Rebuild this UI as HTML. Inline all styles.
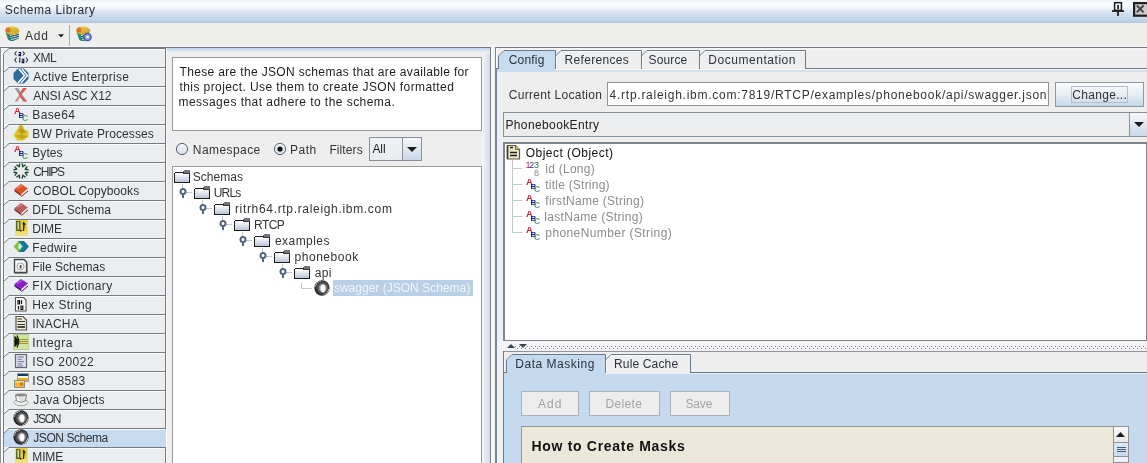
<!DOCTYPE html>
<html><head><meta charset="utf-8"><style>
html,body{margin:0;padding:0;}
body{width:1147px;height:463px;overflow:hidden;position:relative;background:#eeeeee;font-family:"Liberation Sans",sans-serif;}
#root{position:absolute;left:0;top:0;width:1147px;height:463px;overflow:hidden;will-change:transform;}
#root>div{position:absolute;}
.t{white-space:pre;}
</style></head><body><div id="root">
<div style="left:0px;top:0px;width:1147px;height:23px;background:linear-gradient(#eef1f5 0px,#fbfdff 4px,#f6f8fb 7px,#dde6ef 11px,#cddcee 15px,#c5d8ec 19px,#c0d0e0 21px,#bac8d4 23px)"></div>
<div class="t" style="left:4.7px;top:4px;font-size:12px;line-height:12px;color:#2b2f36;font-weight:normal;letter-spacing:0.485px;">Schema Library</div>
<svg style="position:absolute;left:1111px;top:1px;" width="15" height="17" viewBox="0 0 15 17"><rect x="3.6" y="1.7" width="6.8" height="7.6" fill="#fff" stroke="#1a1a1a" stroke-width="1.5"/><rect x="6.2" y="4" width="1.8" height="4" fill="#222"/><rect x="1" y="9.2" width="12" height="1.7" fill="#1a1a1a"/><rect x="6.1" y="10.5" width="1.8" height="4.4" fill="#1a1a1a"/></svg>
<svg style="position:absolute;left:1132px;top:1px;" width="15" height="16" viewBox="0 0 15 16"><rect x="2.1" y="2.1" width="14" height="12.6" fill="#cdcdcd" stroke="#1f1f1f" stroke-width="2.2"/><path d="M4.8 4.5 L11.6 11.3 M11.6 4.5 L4.8 11.3" stroke="#404040" stroke-width="1.8"/></svg>
<div style="left:0px;top:23px;width:1147px;height:1px;background:#e9eef4"></div>
<div style="left:0px;top:24px;width:1147px;height:23px;background:linear-gradient(#eeeeed 0px,#eeeeed 17px,#eef0f2 22px,#f6f8fa 23px)"></div>
<div class="t" style="left:25px;top:30px;font-size:12px;line-height:12px;color:#333;font-weight:normal;letter-spacing:0.75px;">Add</div>
<svg style="position:absolute;left:58px;top:34px;" width="6" height="4" viewBox="0 0 6 4"><path d="M0 0.2 H6 L3 3.4 Z" fill="#222"/></svg>
<div style="left:69px;top:25px;width:1px;height:21px;background:#a9adb3"></div>
<svg style="position:absolute;left:4px;top:25px;" width="17" height="17" viewBox="0 0 17 17"><defs><linearGradient id="bk" x1="0" y1="0" x2="1" y2="0"><stop offset="0" stop-color="#2a9a6a"/><stop offset="1" stop-color="#1a5a88"/></linearGradient><linearGradient id="bt" x1="0" y1="0" x2="1" y2="1"><stop offset="0" stop-color="#f4d050"/><stop offset="1" stop-color="#c89a20"/></linearGradient></defs>
<path d="M1.5 7 L4 14.5 Q6 16.5 9 16 L15 13.5 L15 8 L9 9.5 Z" fill="url(#bk)"/>
<path d="M6 10.5 L15 8.5 M6.5 12.5 L15 10.5 M7 14.5 L15 12.5" stroke="#e8eef0" stroke-width="1"/>
<path d="M6 11.5 L15 9.5 M6.5 13.5 L15 11.5" stroke="#3a4a58" stroke-width="0.8"/>
<path d="M1 6 Q2 1.5 8 1.5 Q13.5 1.5 15.5 5.5 L14 8.5 L8 10 Q3 9.5 1 6Z" fill="url(#bt)"/>
<circle cx="4" cy="5" r="2.2" fill="#e07a28" stroke="#b85a18" stroke-width="0.6"/></svg>
<svg style="position:absolute;left:75px;top:25px;" width="17" height="17" viewBox="0 0 17 17"><defs><linearGradient id="bk" x1="0" y1="0" x2="1" y2="0"><stop offset="0" stop-color="#2a9a6a"/><stop offset="1" stop-color="#1a5a88"/></linearGradient><linearGradient id="bt" x1="0" y1="0" x2="1" y2="1"><stop offset="0" stop-color="#f4d050"/><stop offset="1" stop-color="#c89a20"/></linearGradient></defs>
<path d="M1.5 7 L4 14.5 Q6 16.5 9 16 L15 13.5 L15 8 L9 9.5 Z" fill="url(#bk)"/>
<path d="M6 10.5 L15 8.5 M6.5 12.5 L15 10.5 M7 14.5 L15 12.5" stroke="#e8eef0" stroke-width="1"/>
<path d="M6 11.5 L15 9.5 M6.5 13.5 L15 11.5" stroke="#3a4a58" stroke-width="0.8"/>
<path d="M1 6 Q2 1.5 8 1.5 Q13.5 1.5 15.5 5.5 L14 8.5 L8 10 Q3 9.5 1 6Z" fill="url(#bt)"/>
<circle cx="4" cy="5" r="2.2" fill="#e07a28" stroke="#b85a18" stroke-width="0.6"/><circle cx="12.5" cy="12" r="3.6" fill="#8aa0e0" stroke="#3a58b0" stroke-width="1.3"/><circle cx="12.5" cy="12" r="1.3" fill="#fff"/></svg>
<div style="left:0px;top:47px;width:491px;height:1px;background:#767b82"></div>
<div style="left:495px;top:47px;width:652px;height:1px;background:#767b82"></div>
<div style="left:0px;top:48px;width:166px;height:415px;background:#f4f5f7"></div>
<div style="left:1px;top:48px;width:2px;height:415px;background:#fbfbfc"></div>
<div style="left:0px;top:48px;width:1px;height:415px;background:#8d9096"></div>
<svg style="position:absolute;left:3px;top:48px;" width="162" height="19" viewBox="0 0 162 19"><path d="M0.5 19 V5.5 L6 0.5 H162 V19Z" fill="#eaedf0"/><path d="M0.5 5.5 L6 0.5 H162" fill="none" stroke="#767b82" stroke-width="1"/><path d="M6.5 1.5 H162" stroke="#fafbfc" stroke-width="1"/></svg>
<svg style="position:absolute;left:13px;top:49px;" width="16" height="16" viewBox="0 0 16 16"><g fill="none" stroke-linecap="butt"><path d="M3.5 2.5 L1.8 4.5 L3.5 6.5 M9.8 2.5 L11.5 4.5 L9.8 6.5 M3.5 8.5 L1.8 11 L3.5 13.5 M13 8.5 L14.7 11 L13 13.5" stroke="#2e3a30" stroke-width="1.1"/><path d="M5.6 3.5 H7.6 V6.6 H6 V5.2 H7.4 M6.9 8.6 L6.6 13.6 M8.8 10.4 H10.8 V13.6 H9.2 V12.1 H10.6" stroke="#121a50" stroke-width="1.1"/></g></svg>
<div class="t" style="left:33.0px;top:52px;font-size:12px;line-height:12px;color:#2e3238;font-weight:normal;letter-spacing:-0.45px;">XML</div>
<svg style="position:absolute;left:3px;top:67px;" width="162" height="19" viewBox="0 0 162 19"><path d="M0.5 19 V5.5 L6 0.5 H162 V19Z" fill="#eaedf0"/><path d="M0.5 5.5 L6 0.5 H162" fill="none" stroke="#767b82" stroke-width="1"/><path d="M6.5 1.5 H162" stroke="#fafbfc" stroke-width="1"/></svg>
<svg style="position:absolute;left:13px;top:68px;" width="16" height="16" viewBox="0 0 16 16"><path d="M5 0.5 H11 L15.5 5 V11 L11 15.5 H5 L0.5 11 V5Z" fill="#2f6aa3"/><path d="M6 1 L11.5 7.5 L5 15" stroke="#fff" stroke-width="1.6" fill="none"/><path d="M9 1 L14.5 7.5 L8 15" stroke="#fff" stroke-width="1.3" fill="none"/></svg>
<div class="t" style="left:33.3px;top:71px;font-size:12px;line-height:12px;color:#2e3238;font-weight:normal;letter-spacing:0.313px;">Active Enterprise</div>
<svg style="position:absolute;left:3px;top:86px;" width="162" height="19" viewBox="0 0 162 19"><path d="M0.5 19 V5.5 L6 0.5 H162 V19Z" fill="#eaedf0"/><path d="M0.5 5.5 L6 0.5 H162" fill="none" stroke="#767b82" stroke-width="1"/><path d="M6.5 1.5 H162" stroke="#fafbfc" stroke-width="1"/></svg>
<svg style="position:absolute;left:13px;top:87px;" width="16" height="16" viewBox="0 0 16 16"><path d="M1.5 1 L5 1 L14 14.5 L10.5 14.5Z" fill="#9a9a9a"/><path d="M10 1 L14 1 L8 8 L14 14.5 L10.5 14.5 L5.5 8Z" fill="#d85a5a"/><path d="M1.5 14.5 L6 8.5 L7 10 L4.5 14.5Z" fill="#c48888"/></svg>
<div class="t" style="left:33.3px;top:90px;font-size:12px;line-height:12px;color:#2e3238;font-weight:normal;letter-spacing:-0.182px;">ANSI ASC X12</div>
<svg style="position:absolute;left:3px;top:105px;" width="162" height="19" viewBox="0 0 162 19"><path d="M0.5 19 V5.5 L6 0.5 H162 V19Z" fill="#eaedf0"/><path d="M0.5 5.5 L6 0.5 H162" fill="none" stroke="#767b82" stroke-width="1"/><path d="M6.5 1.5 H162" stroke="#fafbfc" stroke-width="1"/></svg>
<svg style="position:absolute;left:13px;top:106px;" width="16" height="16" viewBox="0 0 16 16"><text x="1" y="8" font-family="Liberation Sans" font-size="9.5" font-weight="bold" fill="#d0283a">A</text><text x="5.6" y="12.3" font-family="Liberation Sans" font-size="8" font-weight="bold" fill="#141c80">B</text><text x="9" y="15.3" font-family="Liberation Sans" font-size="8.5" font-weight="bold" fill="#5a9a7a">C</text></svg>
<div class="t" style="left:32.3px;top:109px;font-size:12px;line-height:12px;color:#2e3238;font-weight:normal;letter-spacing:0.38px;">Base64</div>
<svg style="position:absolute;left:3px;top:124px;" width="162" height="19" viewBox="0 0 162 19"><path d="M0.5 19 V5.5 L6 0.5 H162 V19Z" fill="#eaedf0"/><path d="M0.5 5.5 L6 0.5 H162" fill="none" stroke="#767b82" stroke-width="1"/><path d="M6.5 1.5 H162" stroke="#fafbfc" stroke-width="1"/></svg>
<svg style="position:absolute;left:13px;top:125px;" width="16" height="16" viewBox="0 0 16 16"><path d="M6 0.5 H10 L11 4 L15.5 6.5 L15.5 12 L10 15.5 L4 15.5 L0.5 11 L3 6 L5 4Z" fill="#dcc22e"/><path d="M5 5 L9.5 3.5 L13 7 L8.5 9Z" fill="#b89a10"/><path d="M2 11 L8 9 L14 11.5 L9.5 14Z" fill="#c4a818"/><path d="M6.5 0.5 H9.5 V4 H6.5Z" fill="#c7aa28"/><path d="M1 11 L4 15" stroke="#e8dc70"/></svg>
<div class="t" style="left:32.3px;top:128px;font-size:12px;line-height:12px;color:#2e3238;font-weight:normal;letter-spacing:0.116px;">BW Private Processes</div>
<svg style="position:absolute;left:3px;top:143px;" width="162" height="19" viewBox="0 0 162 19"><path d="M0.5 19 V5.5 L6 0.5 H162 V19Z" fill="#eaedf0"/><path d="M0.5 5.5 L6 0.5 H162" fill="none" stroke="#767b82" stroke-width="1"/><path d="M6.5 1.5 H162" stroke="#fafbfc" stroke-width="1"/></svg>
<svg style="position:absolute;left:13px;top:144px;" width="16" height="16" viewBox="0 0 16 16"><text x="1" y="8" font-family="Liberation Sans" font-size="9.5" font-weight="bold" fill="#d0283a">A</text><text x="5.6" y="12.3" font-family="Liberation Sans" font-size="8" font-weight="bold" fill="#141c80">B</text><text x="9" y="15.3" font-family="Liberation Sans" font-size="8.5" font-weight="bold" fill="#5a9a7a">C</text></svg>
<div class="t" style="left:32.3px;top:147px;font-size:12px;line-height:12px;color:#2e3238;font-weight:normal;letter-spacing:0.05px;">Bytes</div>
<svg style="position:absolute;left:3px;top:162px;" width="162" height="19" viewBox="0 0 162 19"><path d="M0.5 19 V5.5 L6 0.5 H162 V19Z" fill="#eaedf0"/><path d="M0.5 5.5 L6 0.5 H162" fill="none" stroke="#767b82" stroke-width="1"/><path d="M6.5 1.5 H162" stroke="#fafbfc" stroke-width="1"/></svg>
<svg style="position:absolute;left:13px;top:163px;" width="16" height="16" viewBox="0 0 16 16"><path d="M12.06 2.11 L9.76 3.75 L9.29 0.96 M15.04 6.71 L12.25 6.24 L13.89 3.94 M13.89 12.06 L12.25 9.76 L15.04 9.29 M9.29 15.04 L9.76 12.25 L12.06 13.89 M3.94 13.89 L6.24 12.25 L6.71 15.04 M0.96 9.29 L3.75 9.76 L2.11 12.06 M2.11 3.94 L3.75 6.24 L0.96 6.71 M6.71 0.96 L6.24 3.75 L3.94 2.11" stroke="#1f4a32" stroke-width="1.4" fill="none" stroke-linecap="round" stroke-linejoin="round"/></svg>
<div class="t" style="left:33.3px;top:166px;font-size:12px;line-height:12px;color:#2e3238;font-weight:normal;letter-spacing:-1.25px;">CHIPS</div>
<svg style="position:absolute;left:3px;top:181px;" width="162" height="19" viewBox="0 0 162 19"><path d="M0.5 19 V5.5 L6 0.5 H162 V19Z" fill="#eaedf0"/><path d="M0.5 5.5 L6 0.5 H162" fill="none" stroke="#767b82" stroke-width="1"/><path d="M6.5 1.5 H162" stroke="#fafbfc" stroke-width="1"/></svg>
<svg style="position:absolute;left:13px;top:182px;" width="16" height="16" viewBox="0 0 16 16"><path d="M1.5 7 L8 2 L15 6.5 L8.5 12Z" fill="#e2502a"/><path d="M1.5 7 L8.5 12 V14.5 L1.5 9.5Z" fill="#a83218"/><path d="M8.5 12 L15 6.5 V9 L8.5 14.5Z" fill="#f2e6e0"/><path d="M8.5 14.5 L15 9" stroke="#8a2a18" stroke-width="1"/><path d="M4 6.5 L9 3.5" stroke="#ffffff" stroke-opacity=".35" stroke-width="1.2"/></svg>
<div class="t" style="left:33.3px;top:185px;font-size:12px;line-height:12px;color:#2e3238;font-weight:normal;letter-spacing:0.064px;">COBOL Copybooks</div>
<svg style="position:absolute;left:3px;top:200px;" width="162" height="19" viewBox="0 0 162 19"><path d="M0.5 19 V5.5 L6 0.5 H162 V19Z" fill="#eaedf0"/><path d="M0.5 5.5 L6 0.5 H162" fill="none" stroke="#767b82" stroke-width="1"/><path d="M6.5 1.5 H162" stroke="#fafbfc" stroke-width="1"/></svg>
<svg style="position:absolute;left:13px;top:201px;" width="16" height="16" viewBox="0 0 16 16"><path d="M1.5 7 L8 2 L15 6.5 L8.5 12Z" fill="#b85c5c"/><path d="M1.5 7 L8.5 12 V14.5 L1.5 9.5Z" fill="#8a3a3a"/><path d="M8.5 12 L15 6.5 V9 L8.5 14.5Z" fill="#f2e6e0"/><path d="M8.5 14.5 L15 9" stroke="#6a2a2a" stroke-width="1"/><path d="M4 6.5 L9 3.5" stroke="#ffffff" stroke-opacity=".35" stroke-width="1.2"/></svg>
<div class="t" style="left:32.3px;top:204px;font-size:12px;line-height:12px;color:#2e3238;font-weight:normal;letter-spacing:0.05px;">DFDL Schema</div>
<svg style="position:absolute;left:3px;top:219px;" width="162" height="19" viewBox="0 0 162 19"><path d="M0.5 19 V5.5 L6 0.5 H162 V19Z" fill="#eaedf0"/><path d="M0.5 5.5 L6 0.5 H162" fill="none" stroke="#767b82" stroke-width="1"/><path d="M6.5 1.5 H162" stroke="#fafbfc" stroke-width="1"/></svg>
<svg style="position:absolute;left:13px;top:220px;" width="16" height="16" viewBox="0 0 16 16"><path d="M2.5 0 H14.5 V16 H2.5Z" fill="#e6cf3c"/><path d="M2.5 11.5 H14.5 V16 H2.5Z" fill="#efe07a"/><path d="M3 1 H7.5 V11 H3Z" fill="#5e6a22"/><path d="M4.5 2 H6 V9.5 H4.5Z" fill="#d8dc9a"/><path d="M8.5 10 H7 V11.5 H8.5Z" fill="#222"/><path d="M10.5 1.5 L13 4.5 L11.8 4.8 L11 11 H9.8 L10.2 4.5 L9.2 4.2Z" fill="#2a2418"/></svg>
<div class="t" style="left:32.3px;top:223px;font-size:12px;line-height:12px;color:#2e3238;font-weight:normal;letter-spacing:-0.1px;">DIME</div>
<svg style="position:absolute;left:3px;top:238px;" width="162" height="19" viewBox="0 0 162 19"><path d="M0.5 19 V5.5 L6 0.5 H162 V19Z" fill="#eaedf0"/><path d="M0.5 5.5 L6 0.5 H162" fill="none" stroke="#767b82" stroke-width="1"/><path d="M6.5 1.5 H162" stroke="#fafbfc" stroke-width="1"/></svg>
<svg style="position:absolute;left:13px;top:239px;" width="16" height="16" viewBox="0 0 16 16"><path d="M0.5 7.5 L5.5 2 H8.5 L6 7.5 L8.5 13 H5.5Z" fill="#86c040"/><path d="M5.5 2 H11 L16 7.5 L11 13 H5.5 L9 7.5Z" fill="#1a6ea5"/><path d="M5.5 2 H8 L11 7.5 L8 13 H5.5 L8.5 7.5Z" fill="#128a7a"/><path d="M6.5 4 L9.5 7.5 L6.5 11 L5 7.5Z" fill="#c8f4ee"/></svg>
<div class="t" style="left:32.3px;top:242px;font-size:12px;line-height:12px;color:#2e3238;font-weight:normal;letter-spacing:0.383px;">Fedwire</div>
<svg style="position:absolute;left:3px;top:257px;" width="162" height="19" viewBox="0 0 162 19"><path d="M0.5 19 V5.5 L6 0.5 H162 V19Z" fill="#eaedf0"/><path d="M0.5 5.5 L6 0.5 H162" fill="none" stroke="#767b82" stroke-width="1"/><path d="M6.5 1.5 H162" stroke="#fafbfc" stroke-width="1"/></svg>
<svg style="position:absolute;left:13px;top:258px;" width="16" height="16" viewBox="0 0 16 16"><path d="M1.5 1.5 H11 L13.5 4 V14.5 H1.5Z" fill="#fafafa" stroke="#3e3e3e" stroke-width="1.3"/><path d="M14 4.5 V15 H2" stroke="#555" stroke-width="1" fill="none"/><circle cx="7.5" cy="8.5" r="3.6" fill="none" stroke="#9a9a9a" stroke-width="1"/><rect x="6.6" y="7" width="2" height="3.5" fill="#555"/></svg>
<div class="t" style="left:32.3px;top:261px;font-size:12px;line-height:12px;color:#2e3238;font-weight:normal;letter-spacing:0.018px;">File Schemas</div>
<svg style="position:absolute;left:3px;top:276px;" width="162" height="19" viewBox="0 0 162 19"><path d="M0.5 19 V5.5 L6 0.5 H162 V19Z" fill="#eaedf0"/><path d="M0.5 5.5 L6 0.5 H162" fill="none" stroke="#767b82" stroke-width="1"/><path d="M6.5 1.5 H162" stroke="#fafbfc" stroke-width="1"/></svg>
<svg style="position:absolute;left:13px;top:277px;" width="16" height="16" viewBox="0 0 16 16"><path d="M1.5 7 L8 2 L15 6.5 L8.5 12Z" fill="#8a1fc8"/><path d="M1.5 7 L8.5 12 V14.5 L1.5 9.5Z" fill="#5a0f8a"/><path d="M8.5 12 L15 6.5 V9 L8.5 14.5Z" fill="#f2e6e0"/><path d="M8.5 14.5 L15 9" stroke="#4a0a7a" stroke-width="1"/><path d="M4 6.5 L9 3.5" stroke="#ffffff" stroke-opacity=".35" stroke-width="1.2"/></svg>
<div class="t" style="left:32.3px;top:280px;font-size:12px;line-height:12px;color:#2e3238;font-weight:normal;letter-spacing:0.346px;">FIX Dictionary</div>
<svg style="position:absolute;left:3px;top:295px;" width="162" height="19" viewBox="0 0 162 19"><path d="M0.5 19 V5.5 L6 0.5 H162 V19Z" fill="#eaedf0"/><path d="M0.5 5.5 L6 0.5 H162" fill="none" stroke="#767b82" stroke-width="1"/><path d="M6.5 1.5 H162" stroke="#fafbfc" stroke-width="1"/></svg>
<svg style="position:absolute;left:13px;top:296px;" width="16" height="16" viewBox="0 0 16 16"><path d="M2.5 1.5 H10.5 L13 4 V15 H2.5Z" fill="#fafafa" stroke="#555" stroke-width="1.1"/><path d="M5 4.5 V8 H6.5 V4.5Z M8.5 4.3 V8" stroke="#111" stroke-width="1.2" fill="none"/><path d="M5.5 10 V13.5 M8 10 V13.5 H9.8 V10Z" stroke="#111" stroke-width="1.2" fill="none"/></svg>
<div class="t" style="left:32.3px;top:299px;font-size:12px;line-height:12px;color:#2e3238;font-weight:normal;letter-spacing:0.367px;">Hex String</div>
<svg style="position:absolute;left:3px;top:314px;" width="162" height="19" viewBox="0 0 162 19"><path d="M0.5 19 V5.5 L6 0.5 H162 V19Z" fill="#eaedf0"/><path d="M0.5 5.5 L6 0.5 H162" fill="none" stroke="#767b82" stroke-width="1"/><path d="M6.5 1.5 H162" stroke="#fafbfc" stroke-width="1"/></svg>
<svg style="position:absolute;left:13px;top:315px;" width="16" height="16" viewBox="0 0 16 16"><path d="M3 1.5 H10 L13.5 5 V15 H3Z" fill="#f0eed0" stroke="#555" stroke-width="1.2"/><path d="M4.5 4 H9 M4.5 6.5 H12 M4.5 9.5 H12" stroke="#333" stroke-width="1.2"/><path d="M4.5 12 H12" stroke="#111" stroke-width="1.5"/></svg>
<div class="t" style="left:32.3px;top:318px;font-size:12px;line-height:12px;color:#2e3238;font-weight:normal;letter-spacing:0.22px;">INACHA</div>
<svg style="position:absolute;left:3px;top:333px;" width="162" height="19" viewBox="0 0 162 19"><path d="M0.5 19 V5.5 L6 0.5 H162 V19Z" fill="#eaedf0"/><path d="M0.5 5.5 L6 0.5 H162" fill="none" stroke="#767b82" stroke-width="1"/><path d="M6.5 1.5 H162" stroke="#fafbfc" stroke-width="1"/></svg>
<svg style="position:absolute;left:13px;top:334px;" width="16" height="16" viewBox="0 0 16 16"><rect x="0.5" y="0.5" width="15.5" height="15" fill="#cfe4a0" stroke="#a8c080" stroke-width="0.8"/><path d="M1.5 2.5 L6 7.5 L1.5 12.5 M4 1.5 L6 7 M4 13.5 L6 8 M1 7.5 H6" stroke="#1a2208" stroke-width="1.3"/><path d="M6 5.5 H15 M6 7.5 H15 M6 9.5 H15" stroke="#a89020" stroke-width="1"/></svg>
<div class="t" style="left:32.3px;top:337px;font-size:12px;line-height:12px;color:#2e3238;font-weight:normal;letter-spacing:0.45px;">Integra</div>
<svg style="position:absolute;left:3px;top:352px;" width="162" height="19" viewBox="0 0 162 19"><path d="M0.5 19 V5.5 L6 0.5 H162 V19Z" fill="#eaedf0"/><path d="M0.5 5.5 L6 0.5 H162" fill="none" stroke="#767b82" stroke-width="1"/><path d="M6.5 1.5 H162" stroke="#fafbfc" stroke-width="1"/></svg>
<svg style="position:absolute;left:13px;top:353px;" width="16" height="16" viewBox="0 0 16 16"><rect x="2.5" y="1.5" width="11" height="13" fill="#dedff2" stroke="#666670" stroke-width="1.2"/><path d="M4.5 4 H11 M4.5 6.3 H9 M4.5 8.6 H11 M4.5 10.9 H9.5 M4.5 13 H10" stroke="#7a7aa0" stroke-width="1"/></svg>
<div class="t" style="left:32.3px;top:356px;font-size:12px;line-height:12px;color:#2e3238;font-weight:normal;letter-spacing:0.488px;">ISO 20022</div>
<svg style="position:absolute;left:3px;top:371px;" width="162" height="19" viewBox="0 0 162 19"><path d="M0.5 19 V5.5 L6 0.5 H162 V19Z" fill="#eaedf0"/><path d="M0.5 5.5 L6 0.5 H162" fill="none" stroke="#767b82" stroke-width="1"/><path d="M6.5 1.5 H162" stroke="#fafbfc" stroke-width="1"/></svg>
<svg style="position:absolute;left:13px;top:372px;" width="16" height="16" viewBox="0 0 16 16"><rect x="4.5" y="1.5" width="11" height="8" fill="#f0e8c0" stroke="#8a8a80" stroke-width="0.8"/><rect x="5" y="2" width="10" height="2" fill="#123a70"/><rect x="5" y="4" width="10" height="2" fill="#f6f6e0"/><rect x="5" y="6" width="10" height="3" fill="#e6b030"/><rect x="1.5" y="8.5" width="10" height="7" fill="#efb83a" stroke="#8a8a7a" stroke-width="0.9"/><rect x="2" y="9" width="9" height="1.5" fill="#f4e070"/><circle cx="8.5" cy="12" r="1.8" fill="#d07a20"/></svg>
<div class="t" style="left:32.3px;top:375px;font-size:12px;line-height:12px;color:#2e3238;font-weight:normal;letter-spacing:0.314px;">ISO 8583</div>
<svg style="position:absolute;left:3px;top:390px;" width="162" height="19" viewBox="0 0 162 19"><path d="M0.5 19 V5.5 L6 0.5 H162 V19Z" fill="#eaedf0"/><path d="M0.5 5.5 L6 0.5 H162" fill="none" stroke="#767b82" stroke-width="1"/><path d="M6.5 1.5 H162" stroke="#fafbfc" stroke-width="1"/></svg>
<svg style="position:absolute;left:13px;top:391px;" width="16" height="16" viewBox="0 0 16 16"><ellipse cx="8" cy="11.5" rx="7" ry="3.2" fill="#f0f0f0" stroke="#9a9a9a" stroke-width="0.9"/><path d="M2.5 4 H13.5 L12.5 10 Q8 12.5 3.5 10Z" fill="#e2e2e2" stroke="#7a7a7a" stroke-width="0.9"/><ellipse cx="8" cy="4" rx="5.5" ry="1.4" fill="#8a8a8a"/><path d="M5 6 Q4.5 8.5 6 10" stroke="#fff" stroke-width="1.2" fill="none"/></svg>
<div class="t" style="left:33.3px;top:394px;font-size:12px;line-height:12px;color:#2e3238;font-weight:normal;letter-spacing:0.173px;">Java Objects</div>
<svg style="position:absolute;left:3px;top:409px;" width="162" height="19" viewBox="0 0 162 19"><path d="M0.5 19 V5.5 L6 0.5 H162 V19Z" fill="#eaedf0"/><path d="M0.5 5.5 L6 0.5 H162" fill="none" stroke="#767b82" stroke-width="1"/><path d="M6.5 1.5 H162" stroke="#fafbfc" stroke-width="1"/></svg>
<svg style="position:absolute;left:13px;top:410px;" width="16" height="16" viewBox="0 0 16 16"><defs><radialGradient id="jg" cx="0.55" cy="0.5" r="0.5"><stop offset="0.3" stop-color="#c8c8c8"/><stop offset="0.6" stop-color="#5a5a5a"/><stop offset="1" stop-color="#1e1e1e"/></radialGradient></defs><ellipse cx="8" cy="8" rx="7.6" ry="7.8" fill="url(#jg)"/><ellipse cx="9" cy="8.5" rx="2.3" ry="4" fill="#fbfbfb"/><path d="M1.6 6.5 A7 7 0 0 1 7 0.9" stroke="#fff" stroke-width="1.1" stroke-dasharray="1.1 1.1" fill="none"/><path d="M14.6 9.5 A7 7 0 0 1 9.5 15.1" stroke="#fff" stroke-width="1.1" stroke-dasharray="1.1 1.1" fill="none"/></svg>
<div class="t" style="left:33.3px;top:413px;font-size:12px;line-height:12px;color:#2e3238;font-weight:normal;letter-spacing:-1.3px;">JSON</div>
<svg style="position:absolute;left:3px;top:428px;" width="167" height="19" viewBox="0 0 167 19"><path d="M0.5 19 V5.5 L6 0.5 H167 V19Z" fill="#c7dbf0"/><path d="M0.5 5.5 L6 0.5 H167" fill="none" stroke="#767b82" stroke-width="1"/><path d="M6.5 1.5 H167" stroke="#fafbfc" stroke-width="1"/></svg>
<svg style="position:absolute;left:13px;top:429px;" width="16" height="16" viewBox="0 0 16 16"><defs><radialGradient id="jg" cx="0.55" cy="0.5" r="0.5"><stop offset="0.3" stop-color="#c8c8c8"/><stop offset="0.6" stop-color="#5a5a5a"/><stop offset="1" stop-color="#1e1e1e"/></radialGradient></defs><ellipse cx="8" cy="8" rx="7.6" ry="7.8" fill="url(#jg)"/><ellipse cx="9" cy="8.5" rx="2.3" ry="4" fill="#fbfbfb"/><path d="M1.6 6.5 A7 7 0 0 1 7 0.9" stroke="#fff" stroke-width="1.1" stroke-dasharray="1.1 1.1" fill="none"/><path d="M14.6 9.5 A7 7 0 0 1 9.5 15.1" stroke="#fff" stroke-width="1.1" stroke-dasharray="1.1 1.1" fill="none"/></svg>
<div class="t" style="left:33.3px;top:432px;font-size:12px;line-height:12px;color:#2e3238;font-weight:normal;letter-spacing:-0.45px;">JSON Schema</div>
<svg style="position:absolute;left:3px;top:447px;" width="162" height="19" viewBox="0 0 162 19"><path d="M0.5 19 V5.5 L6 0.5 H162 V19Z" fill="#eaedf0"/><path d="M0.5 5.5 L6 0.5 H162" fill="none" stroke="#767b82" stroke-width="1"/><path d="M6.5 1.5 H162" stroke="#fafbfc" stroke-width="1"/></svg>
<svg style="position:absolute;left:13px;top:448px;" width="16" height="16" viewBox="0 0 16 16"><path d="M2.5 0 H14.5 V16 H2.5Z" fill="#e6cf3c"/><path d="M2.5 11.5 H14.5 V16 H2.5Z" fill="#efe07a"/><path d="M3 1 H7.5 V11 H3Z" fill="#5e6a22"/><path d="M4.5 2 H6 V9.5 H4.5Z" fill="#d8dc9a"/><path d="M8.5 10 H7 V11.5 H8.5Z" fill="#222"/><path d="M10.5 1.5 L13 4.5 L11.8 4.8 L11 11 H9.8 L10.2 4.5 L9.2 4.2Z" fill="#2a2418"/></svg>
<div class="t" style="left:32.3px;top:451px;font-size:12px;line-height:12px;color:#2e3238;font-weight:normal;letter-spacing:-0.133px;">MIME</div>
<div style="left:3px;top:54px;width:1px;height:409px;background:#767b82"></div>
<div style="left:165px;top:47px;width:1px;height:416px;background:#767b82"></div>
<div style="left:165px;top:429px;width:2px;height:18px;background:#c7dbf0"></div>
<div style="left:166px;top:48px;width:324px;height:415px;background:#eeeeee"></div>
<div style="left:166px;top:48px;width:324px;height:6px;background:linear-gradient(#c4d5f2 0px,#cbd9ec 2px,#e2e9f0 3px,#e9edf0 4px,#eeeeee 6px)"></div>
<div style="left:166px;top:48px;width:1px;height:415px;background:#fbfcfd"></div>
<div style="left:482px;top:54px;width:8px;height:409px;background:linear-gradient(to right,#f6f8fa,#e4ebf0 40%,#d4dce5)"></div>
<div style="left:490px;top:47px;width:1px;height:416px;background:#767b82"></div>
<div style="left:491px;top:47px;width:4px;height:416px;background:linear-gradient(to right,#fbfcfc,#e9eef0)"></div>
<div style="left:172px;top:57px;width:310px;height:74px;background:#fff;border:1px solid #9a9a9a;box-sizing:border-box"></div>
<div class="t" style="left:179.5px;top:66px;font-size:12px;line-height:12px;color:#1e1e1e;font-weight:normal;letter-spacing:0.34px;">These are the JSON schemas that are available for</div>
<div class="t" style="left:179.5px;top:81px;font-size:12px;line-height:12px;color:#1e1e1e;font-weight:normal;letter-spacing:0.411px;">this project. Use them to create JSON formatted</div>
<div class="t" style="left:178.5px;top:96px;font-size:12px;line-height:12px;color:#1e1e1e;font-weight:normal;letter-spacing:0.456px;">messages that adhere to the schema.</div>
<svg style="position:absolute;left:175px;top:142px;" width="14" height="14" viewBox="0 0 14 14"><defs><linearGradient id="rg" x1="0" y1="0" x2="0" y2="1"><stop offset="0" stop-color="#f4f6f9"/><stop offset="1" stop-color="#d6e0ea"/></linearGradient></defs><circle cx="7" cy="7" r="5.6" fill="url(#rg)" stroke="#5a626c" stroke-width="1"/></svg>
<div class="t" style="left:192.8px;top:144px;font-size:12px;line-height:12px;color:#333;font-weight:normal;letter-spacing:0.425px;">Namespace</div>
<svg style="position:absolute;left:273px;top:142px;" width="14" height="14" viewBox="0 0 14 14"><circle cx="7" cy="7" r="5.6" fill="url(#rg)" stroke="#5a626c" stroke-width="1"/><circle cx="7" cy="7" r="2.6" fill="#111"/></svg>
<div class="t" style="left:290px;top:144px;font-size:12px;line-height:12px;color:#333;font-weight:normal;letter-spacing:0.5px;">Path</div>
<div class="t" style="left:329.4px;top:144px;font-size:12px;line-height:12px;color:#333;font-weight:normal;letter-spacing:0.1px;">Filters</div>
<div style="left:369px;top:137px;width:53px;height:24px;border:1px solid #8a9099;box-sizing:border-box;background:linear-gradient(#eef3f8,#e9ecef)"></div>
<div style="left:402px;top:138px;width:18px;height:22px;border-left:1px solid #8a9099;background:linear-gradient(#f6f8fb,#c9d8e8)"></div>
<svg style="position:absolute;left:407px;top:147px;" width="10" height="5" viewBox="0 0 10 5"><path d="M0 0 H10 L5 5Z" fill="#1d1d1d"/></svg>
<div class="t" style="left:372.4px;top:143px;font-size:12px;line-height:12px;color:#222;font-weight:normal;letter-spacing:-0.05px;">All</div>
<div style="left:172px;top:166px;width:310px;height:297px;background:#fff;border:1px solid #9a9a9a;border-bottom:none;box-sizing:border-box"></div>
<svg style="position:absolute;left:174px;top:170px;shape-rendering:crispEdges" width="17" height="14" viewBox="0 0 17 14"><defs><linearGradient id="fg" x1="0" y1="0" x2="0" y2="1"><stop offset="0" stop-color="#ffffff"/><stop offset="1" stop-color="#bcc5d8"/></linearGradient></defs><rect x="1" y="3" width="14" height="9" fill="url(#fg)"/><path d="M9 2 L10 0 H16 V3 H9Z" fill="#70757c"/><path d="M0.5 2.5 H9.5 M0.5 2.5 V12.5 H15.5 V2.5" fill="none" stroke="#1e1e1e" stroke-width="1"/><path d="M9 3.5 H15.5" stroke="#3a3a3a" stroke-width="1"/></svg>
<div class="t" style="left:192.7px;top:171px;font-size:12px;line-height:12px;color:#333;font-weight:normal;letter-spacing:0.067px;">Schemas</div>
<svg style="position:absolute;left:194px;top:186px;shape-rendering:crispEdges" width="17" height="14" viewBox="0 0 17 14"><defs><linearGradient id="fg" x1="0" y1="0" x2="0" y2="1"><stop offset="0" stop-color="#ffffff"/><stop offset="1" stop-color="#bcc5d8"/></linearGradient></defs><rect x="1" y="3" width="14" height="9" fill="url(#fg)"/><path d="M9 2 L10 0 H16 V3 H9Z" fill="#70757c"/><path d="M0.5 2.5 H9.5 M0.5 2.5 V12.5 H15.5 V2.5" fill="none" stroke="#1e1e1e" stroke-width="1"/><path d="M9 3.5 H15.5" stroke="#3a3a3a" stroke-width="1"/></svg>
<div class="t" style="left:213.7px;top:187px;font-size:12px;line-height:12px;color:#333;font-weight:normal;letter-spacing:-0.8px;">URLs</div>
<div style="left:182px;top:184px;width:1px;height:4px;background:#c5c9ce"></div>
<div style="left:185px;top:192px;width:7px;height:1px;background:#c5c9ce"></div>
<svg style="position:absolute;left:178.5px;top:188px;" width="8" height="11" viewBox="0 0 8 11"><circle cx="4" cy="3.5" r="2.5" fill="none" stroke="#56657a" stroke-width="2"/><rect x="3" y="5.5" width="2" height="4.5" fill="#56657a"/></svg>
<svg style="position:absolute;left:214px;top:202px;shape-rendering:crispEdges" width="17" height="14" viewBox="0 0 17 14"><defs><linearGradient id="fg" x1="0" y1="0" x2="0" y2="1"><stop offset="0" stop-color="#ffffff"/><stop offset="1" stop-color="#bcc5d8"/></linearGradient></defs><rect x="1" y="3" width="14" height="9" fill="url(#fg)"/><path d="M9 2 L10 0 H16 V3 H9Z" fill="#70757c"/><path d="M0.5 2.5 H9.5 M0.5 2.5 V12.5 H15.5 V2.5" fill="none" stroke="#1e1e1e" stroke-width="1"/><path d="M9 3.5 H15.5" stroke="#3a3a3a" stroke-width="1"/></svg>
<div class="t" style="left:234.9px;top:203px;font-size:12px;line-height:12px;color:#333;font-weight:normal;letter-spacing:0.677px;">ritrh64.rtp.raleigh.ibm.com</div>
<div style="left:202px;top:200px;width:1px;height:4px;background:#c5c9ce"></div>
<div style="left:205px;top:208px;width:7px;height:1px;background:#c5c9ce"></div>
<svg style="position:absolute;left:198.5px;top:204px;" width="8" height="11" viewBox="0 0 8 11"><circle cx="4" cy="3.5" r="2.5" fill="none" stroke="#56657a" stroke-width="2"/><rect x="3" y="5.5" width="2" height="4.5" fill="#56657a"/></svg>
<svg style="position:absolute;left:234px;top:218px;shape-rendering:crispEdges" width="17" height="14" viewBox="0 0 17 14"><defs><linearGradient id="fg" x1="0" y1="0" x2="0" y2="1"><stop offset="0" stop-color="#ffffff"/><stop offset="1" stop-color="#bcc5d8"/></linearGradient></defs><rect x="1" y="3" width="14" height="9" fill="url(#fg)"/><path d="M9 2 L10 0 H16 V3 H9Z" fill="#70757c"/><path d="M0.5 2.5 H9.5 M0.5 2.5 V12.5 H15.5 V2.5" fill="none" stroke="#1e1e1e" stroke-width="1"/><path d="M9 3.5 H15.5" stroke="#3a3a3a" stroke-width="1"/></svg>
<div class="t" style="left:254px;top:219px;font-size:12px;line-height:12px;color:#333;font-weight:normal;letter-spacing:-0.567px;">RTCP</div>
<div style="left:222px;top:216px;width:1px;height:4px;background:#c5c9ce"></div>
<div style="left:225px;top:224px;width:7px;height:1px;background:#c5c9ce"></div>
<svg style="position:absolute;left:218.5px;top:220px;" width="8" height="11" viewBox="0 0 8 11"><circle cx="4" cy="3.5" r="2.5" fill="none" stroke="#56657a" stroke-width="2"/><rect x="3" y="5.5" width="2" height="4.5" fill="#56657a"/></svg>
<svg style="position:absolute;left:254px;top:234px;shape-rendering:crispEdges" width="17" height="14" viewBox="0 0 17 14"><defs><linearGradient id="fg" x1="0" y1="0" x2="0" y2="1"><stop offset="0" stop-color="#ffffff"/><stop offset="1" stop-color="#bcc5d8"/></linearGradient></defs><rect x="1" y="3" width="14" height="9" fill="url(#fg)"/><path d="M9 2 L10 0 H16 V3 H9Z" fill="#70757c"/><path d="M0.5 2.5 H9.5 M0.5 2.5 V12.5 H15.5 V2.5" fill="none" stroke="#1e1e1e" stroke-width="1"/><path d="M9 3.5 H15.5" stroke="#3a3a3a" stroke-width="1"/></svg>
<div class="t" style="left:275px;top:235px;font-size:12px;line-height:12px;color:#333;font-weight:normal;letter-spacing:0.443px;">examples</div>
<div style="left:242px;top:232px;width:1px;height:4px;background:#c5c9ce"></div>
<div style="left:245px;top:240px;width:7px;height:1px;background:#c5c9ce"></div>
<svg style="position:absolute;left:238.5px;top:236px;" width="8" height="11" viewBox="0 0 8 11"><circle cx="4" cy="3.5" r="2.5" fill="none" stroke="#56657a" stroke-width="2"/><rect x="3" y="5.5" width="2" height="4.5" fill="#56657a"/></svg>
<svg style="position:absolute;left:274px;top:250px;shape-rendering:crispEdges" width="17" height="14" viewBox="0 0 17 14"><defs><linearGradient id="fg" x1="0" y1="0" x2="0" y2="1"><stop offset="0" stop-color="#ffffff"/><stop offset="1" stop-color="#bcc5d8"/></linearGradient></defs><rect x="1" y="3" width="14" height="9" fill="url(#fg)"/><path d="M9 2 L10 0 H16 V3 H9Z" fill="#70757c"/><path d="M0.5 2.5 H9.5 M0.5 2.5 V12.5 H15.5 V2.5" fill="none" stroke="#1e1e1e" stroke-width="1"/><path d="M9 3.5 H15.5" stroke="#3a3a3a" stroke-width="1"/></svg>
<div class="t" style="left:294.5px;top:251px;font-size:12px;line-height:12px;color:#333;font-weight:normal;letter-spacing:0.538px;">phonebook</div>
<div style="left:262px;top:248px;width:1px;height:4px;background:#c5c9ce"></div>
<div style="left:265px;top:256px;width:7px;height:1px;background:#c5c9ce"></div>
<svg style="position:absolute;left:258.5px;top:252px;" width="8" height="11" viewBox="0 0 8 11"><circle cx="4" cy="3.5" r="2.5" fill="none" stroke="#56657a" stroke-width="2"/><rect x="3" y="5.5" width="2" height="4.5" fill="#56657a"/></svg>
<svg style="position:absolute;left:294px;top:266px;shape-rendering:crispEdges" width="17" height="14" viewBox="0 0 17 14"><defs><linearGradient id="fg" x1="0" y1="0" x2="0" y2="1"><stop offset="0" stop-color="#ffffff"/><stop offset="1" stop-color="#bcc5d8"/></linearGradient></defs><rect x="1" y="3" width="14" height="9" fill="url(#fg)"/><path d="M9 2 L10 0 H16 V3 H9Z" fill="#70757c"/><path d="M0.5 2.5 H9.5 M0.5 2.5 V12.5 H15.5 V2.5" fill="none" stroke="#1e1e1e" stroke-width="1"/><path d="M9 3.5 H15.5" stroke="#3a3a3a" stroke-width="1"/></svg>
<div class="t" style="left:314.7px;top:267px;font-size:12px;line-height:12px;color:#333;font-weight:normal;letter-spacing:0.35px;">api</div>
<div style="left:282px;top:264px;width:1px;height:4px;background:#c5c9ce"></div>
<div style="left:285px;top:272px;width:7px;height:1px;background:#c5c9ce"></div>
<svg style="position:absolute;left:278.5px;top:268px;" width="8" height="11" viewBox="0 0 8 11"><circle cx="4" cy="3.5" r="2.5" fill="none" stroke="#56657a" stroke-width="2"/><rect x="3" y="5.5" width="2" height="4.5" fill="#56657a"/></svg>
<div style="left:301px;top:283px;width:1px;height:6px;background:#c5c9ce"></div>
<div style="left:301px;top:288px;width:11px;height:1px;background:#c5c9ce"></div>
<svg style="position:absolute;left:314px;top:280px;" width="16" height="16" viewBox="0 0 16 16"><defs><radialGradient id="jg" cx="0.55" cy="0.5" r="0.5"><stop offset="0.3" stop-color="#c8c8c8"/><stop offset="0.6" stop-color="#5a5a5a"/><stop offset="1" stop-color="#1e1e1e"/></radialGradient></defs><ellipse cx="8" cy="8" rx="7.6" ry="7.8" fill="url(#jg)"/><ellipse cx="9" cy="8.5" rx="2.3" ry="4" fill="#fbfbfb"/><path d="M1.6 6.5 A7 7 0 0 1 7 0.9" stroke="#fff" stroke-width="1.1" stroke-dasharray="1.1 1.1" fill="none"/><path d="M14.6 9.5 A7 7 0 0 1 9.5 15.1" stroke="#fff" stroke-width="1.1" stroke-dasharray="1.1 1.1" fill="none"/></svg>
<div style="left:333px;top:280px;width:140px;height:16px;background:#b8cfe6"></div>
<div class="t" style="left:333.9px;top:282px;font-size:12px;line-height:12px;color:#f2f6fa;font-weight:normal;letter-spacing:0.015px;">swagger (JSON Schema)</div>
<div style="left:495px;top:48px;width:652px;height:415px;background:#eeeeee"></div>
<div style="left:495px;top:47px;width:1px;height:416px;background:#7b8799"></div>
<div style="left:496px;top:69px;width:1px;height:394px;background:#7b8799"></div>
<div style="left:496px;top:48px;width:1px;height:21px;background:#fafbfc"></div>
<div style="left:497px;top:48px;width:650px;height:2px;background:#f3f3f3"></div>
<div style="left:495px;top:68px;width:652px;height:1px;background:#6b7888"></div>
<div style="left:497px;top:69px;width:650px;height:1px;background:#f7f9fb"></div>
<div style="left:497px;top:70px;width:650px;height:2px;background:#d6e1ec"></div>
<svg style="position:absolute;left:555px;top:50px;" width="87" height="19" viewBox="0 0 87 19"><path d="M1 19 V6.5 L6.5 1 H86 V19Z" fill="#efeeee"/><path d="M1.5 18 V6.8 L6.8 1.5 H86" fill="none" stroke="#fbfbfb" stroke-width="1"/><path d="M0.5 18.5 V6 L6 0.5 H86.5 V18.5" fill="none" stroke="#6b7888" stroke-width="1"/></svg>
<div class="t" style="left:564.5px;top:54px;font-size:12px;line-height:12px;color:#2b3340;font-weight:normal;letter-spacing:0.333px;">References</div>
<svg style="position:absolute;left:641px;top:50px;" width="59" height="19" viewBox="0 0 59 19"><path d="M1 19 V6.5 L6.5 1 H58 V19Z" fill="#efeeee"/><path d="M1.5 18 V6.8 L6.8 1.5 H58" fill="none" stroke="#fbfbfb" stroke-width="1"/><path d="M0.5 18.5 V6 L6 0.5 H58.5 V18.5" fill="none" stroke="#6b7888" stroke-width="1"/></svg>
<div class="t" style="left:648.5px;top:54px;font-size:12px;line-height:12px;color:#2b3340;font-weight:normal;letter-spacing:0.14px;">Source</div>
<svg style="position:absolute;left:699px;top:50px;" width="107" height="19" viewBox="0 0 107 19"><path d="M1 19 V6.5 L6.5 1 H106 V19Z" fill="#efeeee"/><path d="M1.5 18 V6.8 L6.8 1.5 H106" fill="none" stroke="#fbfbfb" stroke-width="1"/><path d="M0.5 18.5 V6 L6 0.5 H106.5 V18.5" fill="none" stroke="#6b7888" stroke-width="1"/></svg>
<div class="t" style="left:708.3px;top:54px;font-size:12px;line-height:12px;color:#2b3340;font-weight:normal;letter-spacing:0.542px;">Documentation</div>
<svg style="position:absolute;left:498px;top:50px;" width="58" height="22" viewBox="0 0 58 22"><path d="M1 22 V6.5 L6.5 1 H57 V22Z" fill="#c8dcf0"/><path d="M0.5 18.5 V6 L6 0.5 H57.5 V18.5" fill="none" stroke="#6b7888" stroke-width="1"/></svg>
<div class="t" style="left:508.7px;top:54px;font-size:12px;line-height:12px;color:#2b3340;font-weight:normal;letter-spacing:0.2px;">Config</div>
<div style="left:497px;top:69px;width:2px;height:3px;background:#c8dcf0"></div>
<div style="left:497px;top:72px;width:650px;height:391px;background:#eeeeee"></div>
<div style="left:497px;top:72px;width:6px;height:270px;background:linear-gradient(to right,#eceef8,#eef0f0)"></div>
<div class="t" style="left:508.7px;top:89px;font-size:12px;line-height:12px;color:#333;font-weight:normal;letter-spacing:0.3px;">Current Location</div>
<div style="left:607px;top:82px;width:442px;height:24px;background:#fff;border:1px solid #8d939a;box-sizing:border-box"></div>
<div class="t" style="left:609.6px;top:89px;font-size:12px;line-height:12px;color:#333;font-weight:normal;letter-spacing:0.741px;">4.rtp.raleigh.ibm.com:7819/RTCP/examples/phonebook/api/swagger.json</div>
<div style="left:1055px;top:82px;width:89px;height:25px;border:1px solid #8b98a6;box-sizing:border-box;background:linear-gradient(#fbfcfe,#e6edf5 50%,#c7d7e8)"></div>
<div style="left:1071px;top:86px;width:57px;height:17px;border:1px solid #b2bfcc;box-sizing:border-box"></div>
<div class="t" style="left:1072.3px;top:89px;font-size:12px;line-height:12px;color:#333;font-weight:normal;letter-spacing:0.3px;">Change...</div>
<div style="left:503px;top:112px;width:650px;height:25px;border:1px solid #8a9099;box-sizing:border-box;background:linear-gradient(#eceff2,#ebebeb)"></div>
<div style="left:1129px;top:113px;width:20px;height:23px;border-left:1px solid #8a9099;background:linear-gradient(#f6f8fb,#c9d8e8)"></div>
<svg style="position:absolute;left:1134px;top:122px;" width="10" height="5" viewBox="0 0 10 5"><path d="M0 0 H10 L5 5Z" fill="#1d1d1d"/></svg>
<div class="t" style="left:505.4px;top:119px;font-size:12px;line-height:12px;color:#222;font-weight:normal;letter-spacing:0.385px;">PhonebookEntry</div>
<div style="left:503px;top:142px;width:644px;height:199px;background:#fff;border:1px solid #7f858c;border-left:2px solid #7f858c;border-top:2px solid #7f858c;box-sizing:border-box"></div>
<svg style="position:absolute;left:506px;top:144px;" width="15" height="16" viewBox="0 0 15 16"><path d="M1.5 1.5 H9.5 L13.5 5.5 V15 H1.5Z" fill="#ebe6c6" stroke="#5e5a3a" stroke-width="1.2"/><path d="M1.5 1.5 V15" stroke="#3e3a20" stroke-width="1.6"/><path d="M9.5 1.5 V5.5 H13.5" fill="#c8c088" stroke="#6e6a45" stroke-width="1"/><path d="M4 3.5 H7 M4 8.5 H11 M4 11.5 H11" stroke="#222" stroke-width="1.3"/></svg>
<div class="t" style="left:525.8px;top:147px;font-size:12px;line-height:12px;color:#111;font-weight:normal;letter-spacing:0.464px;">Object (Object)</div>
<div style="left:512px;top:160px;width:1px;height:73px;background:#c5c9ce"></div>
<div style="left:512px;top:168px;width:10px;height:1px;background:#c5c9ce"></div>
<svg style="position:absolute;left:525px;top:161px;" width="16" height="16" viewBox="0 0 16 16"><text x="0.5" y="7" font-family="Liberation Sans" font-size="9" fill="#c8203a">1</text><text x="4.2" y="7" font-family="Liberation Sans" font-size="9" fill="#2840b0">2</text><text x="9" y="7" font-family="Liberation Sans" font-size="9" fill="#2a7a2a">3</text><text x="9" y="15" font-family="Liberation Sans" font-size="9" fill="#8a8a8a">8</text></svg>
<div class="t" style="left:545.3px;top:163px;font-size:12px;line-height:12px;color:#8c8c8c;font-weight:normal;letter-spacing:0.25px;">id (Long)</div>
<div style="left:512px;top:184px;width:10px;height:1px;background:#c5c9ce"></div>
<svg style="position:absolute;left:525px;top:177px;" width="16" height="16" viewBox="0 0 16 16"><text x="1" y="8" font-family="Liberation Sans" font-size="9.5" font-weight="bold" fill="#d0283a">A</text><text x="5.6" y="12.3" font-family="Liberation Sans" font-size="8" font-weight="bold" fill="#141c80">B</text><text x="9" y="15.3" font-family="Liberation Sans" font-size="8.5" font-weight="bold" fill="#5a9a7a">C</text></svg>
<div class="t" style="left:545.3px;top:179px;font-size:12px;line-height:12px;color:#8c8c8c;font-weight:normal;letter-spacing:0.223px;">title (String)</div>
<div style="left:512px;top:200px;width:10px;height:1px;background:#c5c9ce"></div>
<svg style="position:absolute;left:525px;top:193px;" width="16" height="16" viewBox="0 0 16 16"><text x="1" y="8" font-family="Liberation Sans" font-size="9.5" font-weight="bold" fill="#d0283a">A</text><text x="5.6" y="12.3" font-family="Liberation Sans" font-size="8" font-weight="bold" fill="#141c80">B</text><text x="9" y="15.3" font-family="Liberation Sans" font-size="8.5" font-weight="bold" fill="#5a9a7a">C</text></svg>
<div class="t" style="left:545.3px;top:195px;font-size:12px;line-height:12px;color:#8c8c8c;font-weight:normal;letter-spacing:0.276px;">firstName (String)</div>
<div style="left:512px;top:216px;width:10px;height:1px;background:#c5c9ce"></div>
<svg style="position:absolute;left:525px;top:209px;" width="16" height="16" viewBox="0 0 16 16"><text x="1" y="8" font-family="Liberation Sans" font-size="9.5" font-weight="bold" fill="#d0283a">A</text><text x="5.6" y="12.3" font-family="Liberation Sans" font-size="8" font-weight="bold" fill="#141c80">B</text><text x="9" y="15.3" font-family="Liberation Sans" font-size="8.5" font-weight="bold" fill="#5a9a7a">C</text></svg>
<div class="t" style="left:544.3px;top:211px;font-size:12px;line-height:12px;color:#8c8c8c;font-weight:normal;letter-spacing:0.319px;">lastName (String)</div>
<div style="left:512px;top:232px;width:10px;height:1px;background:#c5c9ce"></div>
<svg style="position:absolute;left:525px;top:225px;" width="16" height="16" viewBox="0 0 16 16"><text x="1" y="8" font-family="Liberation Sans" font-size="9.5" font-weight="bold" fill="#d0283a">A</text><text x="5.6" y="12.3" font-family="Liberation Sans" font-size="8" font-weight="bold" fill="#141c80">B</text><text x="9" y="15.3" font-family="Liberation Sans" font-size="8.5" font-weight="bold" fill="#5a9a7a">C</text></svg>
<div class="t" style="left:545.3px;top:227px;font-size:12px;line-height:12px;color:#8c8c8c;font-weight:normal;letter-spacing:0.405px;">phoneNumber (String)</div>
<div style="left:497px;top:341px;width:650px;height:10px;background:#f4f4f6"></div>
<svg style="position:absolute;left:507px;top:344px;" width="21" height="4" viewBox="0 0 21 4"><path d="M0 4 L4 0 L8 4Z" fill="#3a4256"/><path d="M12 0 H20 L16 4Z" fill="#3a4256"/></svg>
<svg style="position:absolute;left:515px;top:346px;shape-rendering:crispEdges" width="632" height="3" viewBox="0 0 632 3"><rect x="0" y="0" width="1" height="1" fill="#7f8590"/><rect x="4" y="0" width="1" height="1" fill="#7f8590"/><rect x="8" y="0" width="1" height="1" fill="#7f8590"/><rect x="12" y="0" width="1" height="1" fill="#7f8590"/><rect x="16" y="0" width="1" height="1" fill="#7f8590"/><rect x="20" y="0" width="1" height="1" fill="#7f8590"/><rect x="24" y="0" width="1" height="1" fill="#7f8590"/><rect x="28" y="0" width="1" height="1" fill="#7f8590"/><rect x="32" y="0" width="1" height="1" fill="#7f8590"/><rect x="36" y="0" width="1" height="1" fill="#7f8590"/><rect x="40" y="0" width="1" height="1" fill="#7f8590"/><rect x="44" y="0" width="1" height="1" fill="#7f8590"/><rect x="48" y="0" width="1" height="1" fill="#7f8590"/><rect x="52" y="0" width="1" height="1" fill="#7f8590"/><rect x="56" y="0" width="1" height="1" fill="#7f8590"/><rect x="60" y="0" width="1" height="1" fill="#7f8590"/><rect x="64" y="0" width="1" height="1" fill="#7f8590"/><rect x="68" y="0" width="1" height="1" fill="#7f8590"/><rect x="72" y="0" width="1" height="1" fill="#7f8590"/><rect x="76" y="0" width="1" height="1" fill="#7f8590"/><rect x="80" y="0" width="1" height="1" fill="#7f8590"/><rect x="84" y="0" width="1" height="1" fill="#7f8590"/><rect x="88" y="0" width="1" height="1" fill="#7f8590"/><rect x="92" y="0" width="1" height="1" fill="#7f8590"/><rect x="96" y="0" width="1" height="1" fill="#7f8590"/><rect x="100" y="0" width="1" height="1" fill="#7f8590"/><rect x="104" y="0" width="1" height="1" fill="#7f8590"/><rect x="108" y="0" width="1" height="1" fill="#7f8590"/><rect x="112" y="0" width="1" height="1" fill="#7f8590"/><rect x="116" y="0" width="1" height="1" fill="#7f8590"/><rect x="120" y="0" width="1" height="1" fill="#7f8590"/><rect x="124" y="0" width="1" height="1" fill="#7f8590"/><rect x="128" y="0" width="1" height="1" fill="#7f8590"/><rect x="132" y="0" width="1" height="1" fill="#7f8590"/><rect x="136" y="0" width="1" height="1" fill="#7f8590"/><rect x="140" y="0" width="1" height="1" fill="#7f8590"/><rect x="144" y="0" width="1" height="1" fill="#7f8590"/><rect x="148" y="0" width="1" height="1" fill="#7f8590"/><rect x="152" y="0" width="1" height="1" fill="#7f8590"/><rect x="156" y="0" width="1" height="1" fill="#7f8590"/><rect x="160" y="0" width="1" height="1" fill="#7f8590"/><rect x="164" y="0" width="1" height="1" fill="#7f8590"/><rect x="168" y="0" width="1" height="1" fill="#7f8590"/><rect x="172" y="0" width="1" height="1" fill="#7f8590"/><rect x="176" y="0" width="1" height="1" fill="#7f8590"/><rect x="180" y="0" width="1" height="1" fill="#7f8590"/><rect x="184" y="0" width="1" height="1" fill="#7f8590"/><rect x="188" y="0" width="1" height="1" fill="#7f8590"/><rect x="192" y="0" width="1" height="1" fill="#7f8590"/><rect x="196" y="0" width="1" height="1" fill="#7f8590"/><rect x="200" y="0" width="1" height="1" fill="#7f8590"/><rect x="204" y="0" width="1" height="1" fill="#7f8590"/><rect x="208" y="0" width="1" height="1" fill="#7f8590"/><rect x="212" y="0" width="1" height="1" fill="#7f8590"/><rect x="216" y="0" width="1" height="1" fill="#7f8590"/><rect x="220" y="0" width="1" height="1" fill="#7f8590"/><rect x="224" y="0" width="1" height="1" fill="#7f8590"/><rect x="228" y="0" width="1" height="1" fill="#7f8590"/><rect x="232" y="0" width="1" height="1" fill="#7f8590"/><rect x="236" y="0" width="1" height="1" fill="#7f8590"/><rect x="240" y="0" width="1" height="1" fill="#7f8590"/><rect x="244" y="0" width="1" height="1" fill="#7f8590"/><rect x="248" y="0" width="1" height="1" fill="#7f8590"/><rect x="252" y="0" width="1" height="1" fill="#7f8590"/><rect x="256" y="0" width="1" height="1" fill="#7f8590"/><rect x="260" y="0" width="1" height="1" fill="#7f8590"/><rect x="264" y="0" width="1" height="1" fill="#7f8590"/><rect x="268" y="0" width="1" height="1" fill="#7f8590"/><rect x="272" y="0" width="1" height="1" fill="#7f8590"/><rect x="276" y="0" width="1" height="1" fill="#7f8590"/><rect x="280" y="0" width="1" height="1" fill="#7f8590"/><rect x="284" y="0" width="1" height="1" fill="#7f8590"/><rect x="288" y="0" width="1" height="1" fill="#7f8590"/><rect x="292" y="0" width="1" height="1" fill="#7f8590"/><rect x="296" y="0" width="1" height="1" fill="#7f8590"/><rect x="300" y="0" width="1" height="1" fill="#7f8590"/><rect x="304" y="0" width="1" height="1" fill="#7f8590"/><rect x="308" y="0" width="1" height="1" fill="#7f8590"/><rect x="312" y="0" width="1" height="1" fill="#7f8590"/><rect x="316" y="0" width="1" height="1" fill="#7f8590"/><rect x="320" y="0" width="1" height="1" fill="#7f8590"/><rect x="324" y="0" width="1" height="1" fill="#7f8590"/><rect x="328" y="0" width="1" height="1" fill="#7f8590"/><rect x="332" y="0" width="1" height="1" fill="#7f8590"/><rect x="336" y="0" width="1" height="1" fill="#7f8590"/><rect x="340" y="0" width="1" height="1" fill="#7f8590"/><rect x="344" y="0" width="1" height="1" fill="#7f8590"/><rect x="348" y="0" width="1" height="1" fill="#7f8590"/><rect x="352" y="0" width="1" height="1" fill="#7f8590"/><rect x="356" y="0" width="1" height="1" fill="#7f8590"/><rect x="360" y="0" width="1" height="1" fill="#7f8590"/><rect x="364" y="0" width="1" height="1" fill="#7f8590"/><rect x="368" y="0" width="1" height="1" fill="#7f8590"/><rect x="372" y="0" width="1" height="1" fill="#7f8590"/><rect x="376" y="0" width="1" height="1" fill="#7f8590"/><rect x="380" y="0" width="1" height="1" fill="#7f8590"/><rect x="384" y="0" width="1" height="1" fill="#7f8590"/><rect x="388" y="0" width="1" height="1" fill="#7f8590"/><rect x="392" y="0" width="1" height="1" fill="#7f8590"/><rect x="396" y="0" width="1" height="1" fill="#7f8590"/><rect x="400" y="0" width="1" height="1" fill="#7f8590"/><rect x="404" y="0" width="1" height="1" fill="#7f8590"/><rect x="408" y="0" width="1" height="1" fill="#7f8590"/><rect x="412" y="0" width="1" height="1" fill="#7f8590"/><rect x="416" y="0" width="1" height="1" fill="#7f8590"/><rect x="420" y="0" width="1" height="1" fill="#7f8590"/><rect x="424" y="0" width="1" height="1" fill="#7f8590"/><rect x="428" y="0" width="1" height="1" fill="#7f8590"/><rect x="432" y="0" width="1" height="1" fill="#7f8590"/><rect x="436" y="0" width="1" height="1" fill="#7f8590"/><rect x="440" y="0" width="1" height="1" fill="#7f8590"/><rect x="444" y="0" width="1" height="1" fill="#7f8590"/><rect x="448" y="0" width="1" height="1" fill="#7f8590"/><rect x="452" y="0" width="1" height="1" fill="#7f8590"/><rect x="456" y="0" width="1" height="1" fill="#7f8590"/><rect x="460" y="0" width="1" height="1" fill="#7f8590"/><rect x="464" y="0" width="1" height="1" fill="#7f8590"/><rect x="468" y="0" width="1" height="1" fill="#7f8590"/><rect x="472" y="0" width="1" height="1" fill="#7f8590"/><rect x="476" y="0" width="1" height="1" fill="#7f8590"/><rect x="480" y="0" width="1" height="1" fill="#7f8590"/><rect x="484" y="0" width="1" height="1" fill="#7f8590"/><rect x="488" y="0" width="1" height="1" fill="#7f8590"/><rect x="492" y="0" width="1" height="1" fill="#7f8590"/><rect x="496" y="0" width="1" height="1" fill="#7f8590"/><rect x="500" y="0" width="1" height="1" fill="#7f8590"/><rect x="504" y="0" width="1" height="1" fill="#7f8590"/><rect x="508" y="0" width="1" height="1" fill="#7f8590"/><rect x="512" y="0" width="1" height="1" fill="#7f8590"/><rect x="516" y="0" width="1" height="1" fill="#7f8590"/><rect x="520" y="0" width="1" height="1" fill="#7f8590"/><rect x="524" y="0" width="1" height="1" fill="#7f8590"/><rect x="528" y="0" width="1" height="1" fill="#7f8590"/><rect x="532" y="0" width="1" height="1" fill="#7f8590"/><rect x="536" y="0" width="1" height="1" fill="#7f8590"/><rect x="540" y="0" width="1" height="1" fill="#7f8590"/><rect x="544" y="0" width="1" height="1" fill="#7f8590"/><rect x="548" y="0" width="1" height="1" fill="#7f8590"/><rect x="552" y="0" width="1" height="1" fill="#7f8590"/><rect x="556" y="0" width="1" height="1" fill="#7f8590"/><rect x="560" y="0" width="1" height="1" fill="#7f8590"/><rect x="564" y="0" width="1" height="1" fill="#7f8590"/><rect x="568" y="0" width="1" height="1" fill="#7f8590"/><rect x="572" y="0" width="1" height="1" fill="#7f8590"/><rect x="576" y="0" width="1" height="1" fill="#7f8590"/><rect x="580" y="0" width="1" height="1" fill="#7f8590"/><rect x="584" y="0" width="1" height="1" fill="#7f8590"/><rect x="588" y="0" width="1" height="1" fill="#7f8590"/><rect x="592" y="0" width="1" height="1" fill="#7f8590"/><rect x="596" y="0" width="1" height="1" fill="#7f8590"/><rect x="600" y="0" width="1" height="1" fill="#7f8590"/><rect x="604" y="0" width="1" height="1" fill="#7f8590"/><rect x="608" y="0" width="1" height="1" fill="#7f8590"/><rect x="612" y="0" width="1" height="1" fill="#7f8590"/><rect x="616" y="0" width="1" height="1" fill="#7f8590"/><rect x="620" y="0" width="1" height="1" fill="#7f8590"/><rect x="624" y="0" width="1" height="1" fill="#7f8590"/><rect x="628" y="0" width="1" height="1" fill="#7f8590"/><rect x="632" y="0" width="1" height="1" fill="#7f8590"/><rect x="636" y="0" width="1" height="1" fill="#7f8590"/><rect x="2" y="2" width="1" height="1" fill="#7f8590"/><rect x="6" y="2" width="1" height="1" fill="#7f8590"/><rect x="10" y="2" width="1" height="1" fill="#7f8590"/><rect x="14" y="2" width="1" height="1" fill="#7f8590"/><rect x="18" y="2" width="1" height="1" fill="#7f8590"/><rect x="22" y="2" width="1" height="1" fill="#7f8590"/><rect x="26" y="2" width="1" height="1" fill="#7f8590"/><rect x="30" y="2" width="1" height="1" fill="#7f8590"/><rect x="34" y="2" width="1" height="1" fill="#7f8590"/><rect x="38" y="2" width="1" height="1" fill="#7f8590"/><rect x="42" y="2" width="1" height="1" fill="#7f8590"/><rect x="46" y="2" width="1" height="1" fill="#7f8590"/><rect x="50" y="2" width="1" height="1" fill="#7f8590"/><rect x="54" y="2" width="1" height="1" fill="#7f8590"/><rect x="58" y="2" width="1" height="1" fill="#7f8590"/><rect x="62" y="2" width="1" height="1" fill="#7f8590"/><rect x="66" y="2" width="1" height="1" fill="#7f8590"/><rect x="70" y="2" width="1" height="1" fill="#7f8590"/><rect x="74" y="2" width="1" height="1" fill="#7f8590"/><rect x="78" y="2" width="1" height="1" fill="#7f8590"/><rect x="82" y="2" width="1" height="1" fill="#7f8590"/><rect x="86" y="2" width="1" height="1" fill="#7f8590"/><rect x="90" y="2" width="1" height="1" fill="#7f8590"/><rect x="94" y="2" width="1" height="1" fill="#7f8590"/><rect x="98" y="2" width="1" height="1" fill="#7f8590"/><rect x="102" y="2" width="1" height="1" fill="#7f8590"/><rect x="106" y="2" width="1" height="1" fill="#7f8590"/><rect x="110" y="2" width="1" height="1" fill="#7f8590"/><rect x="114" y="2" width="1" height="1" fill="#7f8590"/><rect x="118" y="2" width="1" height="1" fill="#7f8590"/><rect x="122" y="2" width="1" height="1" fill="#7f8590"/><rect x="126" y="2" width="1" height="1" fill="#7f8590"/><rect x="130" y="2" width="1" height="1" fill="#7f8590"/><rect x="134" y="2" width="1" height="1" fill="#7f8590"/><rect x="138" y="2" width="1" height="1" fill="#7f8590"/><rect x="142" y="2" width="1" height="1" fill="#7f8590"/><rect x="146" y="2" width="1" height="1" fill="#7f8590"/><rect x="150" y="2" width="1" height="1" fill="#7f8590"/><rect x="154" y="2" width="1" height="1" fill="#7f8590"/><rect x="158" y="2" width="1" height="1" fill="#7f8590"/><rect x="162" y="2" width="1" height="1" fill="#7f8590"/><rect x="166" y="2" width="1" height="1" fill="#7f8590"/><rect x="170" y="2" width="1" height="1" fill="#7f8590"/><rect x="174" y="2" width="1" height="1" fill="#7f8590"/><rect x="178" y="2" width="1" height="1" fill="#7f8590"/><rect x="182" y="2" width="1" height="1" fill="#7f8590"/><rect x="186" y="2" width="1" height="1" fill="#7f8590"/><rect x="190" y="2" width="1" height="1" fill="#7f8590"/><rect x="194" y="2" width="1" height="1" fill="#7f8590"/><rect x="198" y="2" width="1" height="1" fill="#7f8590"/><rect x="202" y="2" width="1" height="1" fill="#7f8590"/><rect x="206" y="2" width="1" height="1" fill="#7f8590"/><rect x="210" y="2" width="1" height="1" fill="#7f8590"/><rect x="214" y="2" width="1" height="1" fill="#7f8590"/><rect x="218" y="2" width="1" height="1" fill="#7f8590"/><rect x="222" y="2" width="1" height="1" fill="#7f8590"/><rect x="226" y="2" width="1" height="1" fill="#7f8590"/><rect x="230" y="2" width="1" height="1" fill="#7f8590"/><rect x="234" y="2" width="1" height="1" fill="#7f8590"/><rect x="238" y="2" width="1" height="1" fill="#7f8590"/><rect x="242" y="2" width="1" height="1" fill="#7f8590"/><rect x="246" y="2" width="1" height="1" fill="#7f8590"/><rect x="250" y="2" width="1" height="1" fill="#7f8590"/><rect x="254" y="2" width="1" height="1" fill="#7f8590"/><rect x="258" y="2" width="1" height="1" fill="#7f8590"/><rect x="262" y="2" width="1" height="1" fill="#7f8590"/><rect x="266" y="2" width="1" height="1" fill="#7f8590"/><rect x="270" y="2" width="1" height="1" fill="#7f8590"/><rect x="274" y="2" width="1" height="1" fill="#7f8590"/><rect x="278" y="2" width="1" height="1" fill="#7f8590"/><rect x="282" y="2" width="1" height="1" fill="#7f8590"/><rect x="286" y="2" width="1" height="1" fill="#7f8590"/><rect x="290" y="2" width="1" height="1" fill="#7f8590"/><rect x="294" y="2" width="1" height="1" fill="#7f8590"/><rect x="298" y="2" width="1" height="1" fill="#7f8590"/><rect x="302" y="2" width="1" height="1" fill="#7f8590"/><rect x="306" y="2" width="1" height="1" fill="#7f8590"/><rect x="310" y="2" width="1" height="1" fill="#7f8590"/><rect x="314" y="2" width="1" height="1" fill="#7f8590"/><rect x="318" y="2" width="1" height="1" fill="#7f8590"/><rect x="322" y="2" width="1" height="1" fill="#7f8590"/><rect x="326" y="2" width="1" height="1" fill="#7f8590"/><rect x="330" y="2" width="1" height="1" fill="#7f8590"/><rect x="334" y="2" width="1" height="1" fill="#7f8590"/><rect x="338" y="2" width="1" height="1" fill="#7f8590"/><rect x="342" y="2" width="1" height="1" fill="#7f8590"/><rect x="346" y="2" width="1" height="1" fill="#7f8590"/><rect x="350" y="2" width="1" height="1" fill="#7f8590"/><rect x="354" y="2" width="1" height="1" fill="#7f8590"/><rect x="358" y="2" width="1" height="1" fill="#7f8590"/><rect x="362" y="2" width="1" height="1" fill="#7f8590"/><rect x="366" y="2" width="1" height="1" fill="#7f8590"/><rect x="370" y="2" width="1" height="1" fill="#7f8590"/><rect x="374" y="2" width="1" height="1" fill="#7f8590"/><rect x="378" y="2" width="1" height="1" fill="#7f8590"/><rect x="382" y="2" width="1" height="1" fill="#7f8590"/><rect x="386" y="2" width="1" height="1" fill="#7f8590"/><rect x="390" y="2" width="1" height="1" fill="#7f8590"/><rect x="394" y="2" width="1" height="1" fill="#7f8590"/><rect x="398" y="2" width="1" height="1" fill="#7f8590"/><rect x="402" y="2" width="1" height="1" fill="#7f8590"/><rect x="406" y="2" width="1" height="1" fill="#7f8590"/><rect x="410" y="2" width="1" height="1" fill="#7f8590"/><rect x="414" y="2" width="1" height="1" fill="#7f8590"/><rect x="418" y="2" width="1" height="1" fill="#7f8590"/><rect x="422" y="2" width="1" height="1" fill="#7f8590"/><rect x="426" y="2" width="1" height="1" fill="#7f8590"/><rect x="430" y="2" width="1" height="1" fill="#7f8590"/><rect x="434" y="2" width="1" height="1" fill="#7f8590"/><rect x="438" y="2" width="1" height="1" fill="#7f8590"/><rect x="442" y="2" width="1" height="1" fill="#7f8590"/><rect x="446" y="2" width="1" height="1" fill="#7f8590"/><rect x="450" y="2" width="1" height="1" fill="#7f8590"/><rect x="454" y="2" width="1" height="1" fill="#7f8590"/><rect x="458" y="2" width="1" height="1" fill="#7f8590"/><rect x="462" y="2" width="1" height="1" fill="#7f8590"/><rect x="466" y="2" width="1" height="1" fill="#7f8590"/><rect x="470" y="2" width="1" height="1" fill="#7f8590"/><rect x="474" y="2" width="1" height="1" fill="#7f8590"/><rect x="478" y="2" width="1" height="1" fill="#7f8590"/><rect x="482" y="2" width="1" height="1" fill="#7f8590"/><rect x="486" y="2" width="1" height="1" fill="#7f8590"/><rect x="490" y="2" width="1" height="1" fill="#7f8590"/><rect x="494" y="2" width="1" height="1" fill="#7f8590"/><rect x="498" y="2" width="1" height="1" fill="#7f8590"/><rect x="502" y="2" width="1" height="1" fill="#7f8590"/><rect x="506" y="2" width="1" height="1" fill="#7f8590"/><rect x="510" y="2" width="1" height="1" fill="#7f8590"/><rect x="514" y="2" width="1" height="1" fill="#7f8590"/><rect x="518" y="2" width="1" height="1" fill="#7f8590"/><rect x="522" y="2" width="1" height="1" fill="#7f8590"/><rect x="526" y="2" width="1" height="1" fill="#7f8590"/><rect x="530" y="2" width="1" height="1" fill="#7f8590"/><rect x="534" y="2" width="1" height="1" fill="#7f8590"/><rect x="538" y="2" width="1" height="1" fill="#7f8590"/><rect x="542" y="2" width="1" height="1" fill="#7f8590"/><rect x="546" y="2" width="1" height="1" fill="#7f8590"/><rect x="550" y="2" width="1" height="1" fill="#7f8590"/><rect x="554" y="2" width="1" height="1" fill="#7f8590"/><rect x="558" y="2" width="1" height="1" fill="#7f8590"/><rect x="562" y="2" width="1" height="1" fill="#7f8590"/><rect x="566" y="2" width="1" height="1" fill="#7f8590"/><rect x="570" y="2" width="1" height="1" fill="#7f8590"/><rect x="574" y="2" width="1" height="1" fill="#7f8590"/><rect x="578" y="2" width="1" height="1" fill="#7f8590"/><rect x="582" y="2" width="1" height="1" fill="#7f8590"/><rect x="586" y="2" width="1" height="1" fill="#7f8590"/><rect x="590" y="2" width="1" height="1" fill="#7f8590"/><rect x="594" y="2" width="1" height="1" fill="#7f8590"/><rect x="598" y="2" width="1" height="1" fill="#7f8590"/><rect x="602" y="2" width="1" height="1" fill="#7f8590"/><rect x="606" y="2" width="1" height="1" fill="#7f8590"/><rect x="610" y="2" width="1" height="1" fill="#7f8590"/><rect x="614" y="2" width="1" height="1" fill="#7f8590"/><rect x="618" y="2" width="1" height="1" fill="#7f8590"/><rect x="622" y="2" width="1" height="1" fill="#7f8590"/><rect x="626" y="2" width="1" height="1" fill="#7f8590"/><rect x="630" y="2" width="1" height="1" fill="#7f8590"/><rect x="634" y="2" width="1" height="1" fill="#7f8590"/><rect x="638" y="2" width="1" height="1" fill="#7f8590"/></svg>
<div style="left:503px;top:351px;width:644px;height:1px;background:#8a929c"></div>
<div style="left:503px;top:351px;width:1px;height:112px;background:#6b7888"></div>
<div style="left:504px;top:352px;width:643px;height:20px;background:#eeeeee"></div>
<div style="left:497px;top:351px;width:6px;height:112px;background:#eef0f3"></div>
<div style="left:504px;top:372px;width:643px;height:1px;background:#6b7888"></div>
<svg style="position:absolute;left:605px;top:354px;" width="86" height="19" viewBox="0 0 86 19"><path d="M1 19 V6.5 L6.5 1 H85 V19Z" fill="#efeeee"/><path d="M1.5 18 V6.8 L6.8 1.5 H85" fill="none" stroke="#fbfbfb" stroke-width="1"/><path d="M0.5 18.5 V6 L6 0.5 H85.5 V18.5" fill="none" stroke="#6b7888" stroke-width="1"/></svg>
<div class="t" style="left:614px;top:358px;font-size:12px;line-height:12px;color:#2b3340;font-weight:normal;letter-spacing:0.156px;">Rule Cache</div>
<svg style="position:absolute;left:506px;top:354px;" width="100" height="20" viewBox="0 0 100 20"><path d="M1 20 V6.5 L6.5 1 H99 V20Z" fill="#c6daef"/><path d="M0.5 18.5 V6 L6 0.5 H99.5 V18.5" fill="none" stroke="#6b7888" stroke-width="1"/></svg>
<div class="t" style="left:515.3px;top:358px;font-size:12px;line-height:12px;color:#2b3340;font-weight:normal;letter-spacing:0.518px;">Data Masking</div>
<div style="left:504px;top:373px;width:643px;height:90px;background:#c6daef"></div>
<div style="left:605px;top:373px;width:542px;height:1px;background:#e6f0f8"></div>
<div style="left:521px;top:391px;width:58px;height:25px;background:#ededed;border:1px solid #a9b1ba;box-sizing:border-box"></div>
<div class="t" style="left:538px;top:398px;font-size:12px;line-height:12px;color:#a3a3a3;font-weight:normal;letter-spacing:1.0px;">Add</div>
<div style="left:589px;top:391px;width:71px;height:25px;background:#ededed;border:1px solid #a9b1ba;box-sizing:border-box"></div>
<div class="t" style="left:605.4px;top:398px;font-size:12px;line-height:12px;color:#a3a3a3;font-weight:normal;letter-spacing:0.38px;">Delete</div>
<div style="left:670px;top:391px;width:60px;height:25px;background:#ededed;border:1px solid #a9b1ba;box-sizing:border-box"></div>
<div class="t" style="left:685.4px;top:398px;font-size:12px;line-height:12px;color:#a3a3a3;font-weight:normal;letter-spacing:-0.133px;">Save</div>
<div style="left:521px;top:426px;width:593px;height:37px;background:#ebe7d9;border:1px solid #8e949a;border-right:none;border-bottom:none;box-sizing:border-box"></div>
<div class="t" style="left:531.4px;top:439px;font-size:14px;line-height:14px;color:#111;font-weight:bold;letter-spacing:0.7px;">How to Create Masks</div>
<div style="left:1113px;top:426px;width:16px;height:37px;background:#eef1f5;border:1px solid #8e949a;box-sizing:border-box"></div>
<div style="left:1114px;top:427px;width:14px;height:15px;background:linear-gradient(#fafafa,#e8e8e8)"></div>
<div style="left:1114px;top:442px;width:14px;height:1px;background:#8e949a"></div>
<svg style="position:absolute;left:1116px;top:432px;" width="9" height="5" viewBox="0 0 9 5"><path d="M0 5 L4.5 0 L9 5Z" fill="#1d1d1d"/></svg>
<div style="left:1114px;top:443px;width:14px;height:14px;background:linear-gradient(#dfe9f5,#c9daee);border-bottom:1px solid #8e949a;box-sizing:border-box"></div>
<div style="left:1117px;top:447px;width:9px;height:1px;background:#4a5a70"></div>
<div style="left:1117px;top:449px;width:9px;height:1px;background:#4a5a70"></div>
<div style="left:1117px;top:451px;width:9px;height:1px;background:#4a5a70"></div>
<div style="left:1129px;top:426px;width:18px;height:37px;background:#c6daef"></div>
</div></body></html>
